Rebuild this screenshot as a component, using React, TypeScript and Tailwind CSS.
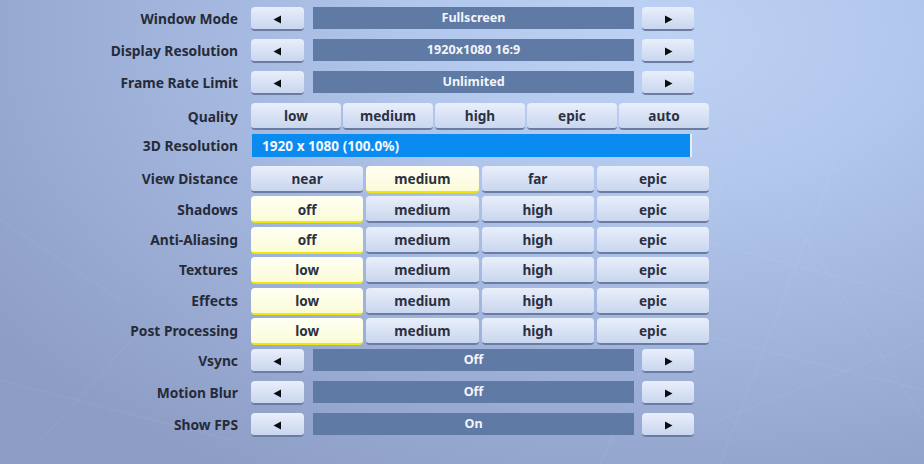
import React from "react";

const font = { fontFamily: '"Noto Sans", "Open Sans", sans-serif' };

function Arrow({ dir }: { dir: "left" | "right" }) {
    return (
        <svg width="9" height="9" viewBox="0 0 9 9">
            {dir === "left" ? <polygon points="8,0.5 8,8.5 0.5,4.5" fill="#0b0d12" /> : <polygon points="1,0.5 1,8.5 8.5,4.5" fill="#0b0d12" />}
        </svg>
    );
}

function Btn({ children, active, className = "" }: { children?: React.ReactNode; active?: boolean; className?: string }) {
    return (
        <div
            className={
                "flex items-center justify-center rounded-[4px] border-b-2 pt-[2px] text-[13.6px] font-bold text-[#2b3142] " +
                (active
                    ? "bg-[linear-gradient(#fffff4,#fbfbd8)] border-[#eee80a] "
                    : "bg-[linear-gradient(#e9effb,#c9d6ee)] border-[#6b7ca3] ") +
                className
            }
        >
            {children}
        </div>
    );
}

function Label({ children }: { children: React.ReactNode }) {
    return <div className="w-[238px] shrink-0 text-right text-[13.8px] font-bold text-[#262b38]">{children}</div>;
}

function Cycler({ label, value }: { label: string; value: string }) {
    return (
        <div className="flex h-[32px] items-start">
            <div className="flex h-[24px] items-center">
                <Label>{label}</Label>
            </div>
            <div className="ml-[13px] flex w-[443px] items-start">
                <Btn className="h-[24px] w-[53px]">
                    <Arrow dir="left" />
                </Btn>
                <div className="ml-[9px] flex h-[22px] w-[321px] items-center justify-center bg-[#5f7aa5] pt-[1px] text-[12.6px] font-bold text-[#f2f5fb]">
                    {value}
                </div>
                <Btn className="ml-[8px] h-[24px] w-[52px]">
                    <Arrow dir="right" />
                </Btn>
            </div>
        </div>
    );
}

function Choice({ label, options, selected }: { label: string; options: string[]; selected: number }) {
    return (
        <div className="flex h-[30.4px] items-start">
            <div className="flex h-[27px] items-center">
                <Label>{label}</Label>
            </div>
            <div className="ml-[13px] grid h-[27px] w-[458px] grid-cols-4 gap-[3px]">
                {options.map((o, i) => (
                    <Btn key={o} active={i === selected}>
                        {o}
                    </Btn>
                ))}
            </div>
        </div>
    );
}

export default function App() {
    const four = (a: string) => [a, "medium", "high", "epic"];

    return (
        <div
            style={font}
            className="relative h-[464px] w-[924px] overflow-hidden bg-[radial-gradient(ellipse_90%_110%_at_72%_8%,#bdd2f3_0%,#b2c7ec_30%,#a1b4dc_60%,#8d9dc5_100%)]"
        >
            {/* faint grid lines in the backdrop */}
            <svg className="pointer-events-none absolute inset-0" width="924" height="464">
                <g stroke="#ffffff" strokeOpacity="0.07" strokeWidth="1">
                    <line x1="760" y1="100" x2="600" y2="464" />
                    <line x1="840" y1="150" x2="720" y2="464" />
                    <line x1="700" y1="240" x2="924" y2="300" />
                    <line x1="680" y1="330" x2="924" y2="390" />
                    <line x1="720" y1="420" x2="924" y2="340" />
                    <line x1="780" y1="200" x2="924" y2="420" />
                    <line x1="0" y1="220" x2="120" y2="300" />
                    <line x1="20" y1="464" x2="140" y2="330" />
                    <line x1="0" y1="380" x2="230" y2="440" />
                </g>
            </svg>

            <div className="relative flex flex-col pt-[7px]">
                <Cycler label="Window Mode" value="Fullscreen" />
                <Cycler label="Display Resolution" value="1920x1080 16:9" />
                <Cycler label="Frame Rate Limit" value="Unlimited" />

                <div className="flex h-[31px] items-start">
                    <div className="flex h-[27px] items-center pt-[2px]">
                        <Label>Quality</Label>
                    </div>
                    <div className="ml-[13px] grid h-[27px] w-[458px] grid-cols-5 gap-[2px]">
                        {["low", "medium", "high", "epic", "auto"].map((o) => (
                            <Btn key={o}>{o}</Btn>
                        ))}
                    </div>
                </div>

                <div className="flex h-[32px] items-start">
                    <div className="flex h-[23px] items-center pt-[1px]">
                        <Label>3D Resolution</Label>
                    </div>
                    <div className="ml-[14px] flex h-[23px] w-[440px] items-center border-r-[2px] border-[#e4eefc] bg-[#0a8bf0] pl-[10px] pt-[1px] text-[13.6px] font-bold text-[#f3f8ff]">
                        1920 x 1080 (100.0%)
                    </div>
                </div>

                <Choice label="View Distance" options={["near", "medium", "far", "epic"]} selected={1} />
                <Choice label="Shadows" options={four("off")} selected={0} />
                <Choice label="Anti-Aliasing" options={four("off")} selected={0} />
                <Choice label="Textures" options={four("low")} selected={0} />
                <Choice label="Effects" options={four("low")} selected={0} />
                <Choice label="Post Processing" options={four("low")} selected={0} />

                <div className="h-[1px]" />
                <Cycler label="Vsync" value="Off" />
                <Cycler label="Motion Blur" value="Off" />
                <Cycler label="Show FPS" value="On" />
            </div>
        </div>
    );
}
